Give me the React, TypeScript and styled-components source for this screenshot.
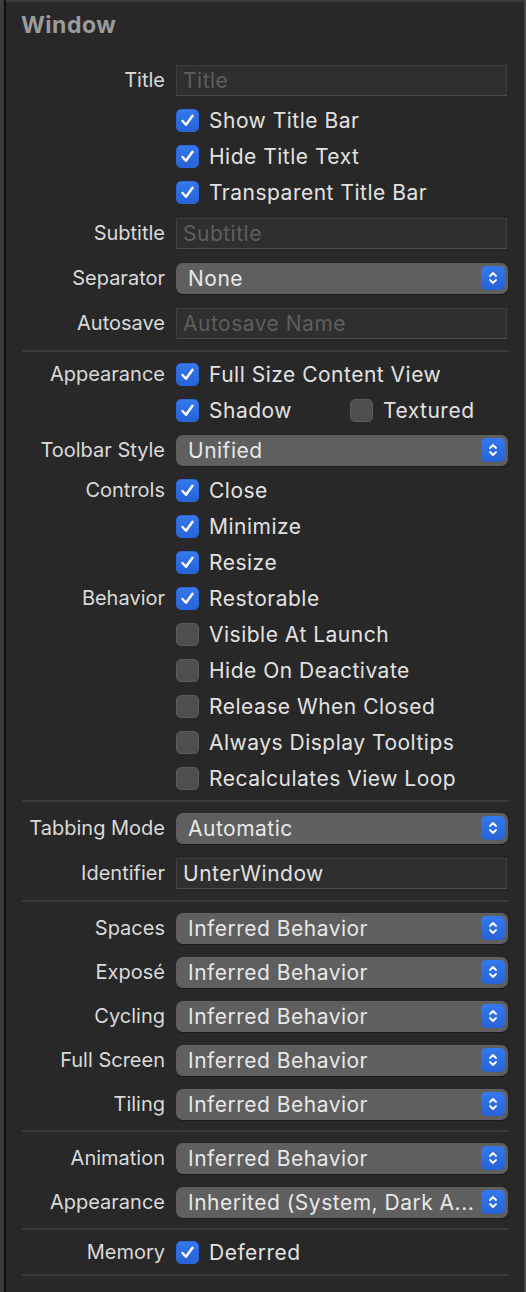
import React from 'react';
import styled, { createGlobalStyle } from 'styled-components';

const GlobalStyle = createGlobalStyle`
  html, body {
    margin: 0;
    padding: 0;
    background: #282828;
  }
  body {
    font-family: Inter, "Liberation Sans", sans-serif;
    -webkit-font-smoothing: antialiased;
  }
`;

const Frame = styled.div`
  display: flex;
  width: 526px;
  height: 1292px;
  overflow: hidden;
  background: #282828;
`;

const Gutter = styled.div`
  width: 4px;
  background: #3b3b3b;
  border-right: 2px solid #0e0e0e;
`;

const Panel = styled.div`
  flex: 1;
  display: flex;
  flex-direction: column;
  border-top: 2px solid #3a3a3a;
  border-right: 2px solid #474747;
  padding-right: 12px;
`;

const Header = styled.h2`
  margin: 0;
  height: 52px;
  padding: 10px 0 0 15px;
  box-sizing: border-box;
  font-size: 23px;
  letter-spacing: 0.5px;
  font-weight: 700;
  color: #9b9b9b;
  line-height: 26px;
`;

const Section = styled.div`
  display: flex;
  flex-direction: column;
  padding: 4px 0;
`;

const Divider = styled.div`
  height: 2px;
  margin: 0 3px 0 16px;
  background: #383838;
`;

const Row = styled.div<{ $h: number }>`
  display: grid;
  grid-template-columns: 159px 1fr;
  column-gap: 11px;
  align-items: center;
  height: ${p => p.$h}px;
`;

const Label = styled.div`
  text-align: right;
  font-size: 20px;
  color: #dadada;
  white-space: nowrap;
`;

const Controls = styled.div`
  display: flex;
  align-items: center;
`;

const Field = styled.div<{ $placeholder?: boolean }>`
  width: 331px;
  height: 31px;
  box-sizing: border-box;
  display: flex;
  align-items: center;
  padding: 0 6px;
  background: #2f2f2f;
  border: 1px solid #3e3e3e;
  border-bottom-color: #4a4a4a;
  font-size: 21px;
  letter-spacing: 0.5px;
  color: ${p => (p.$placeholder ? '#5e5e5e' : '#e2e2e2')};
`;

const Popup = styled.div`
  width: 332px;
  height: 31px;
  box-sizing: border-box;
  display: flex;
  align-items: center;
  justify-content: space-between;
  padding: 0 3px 0 12px;
  background: #5f5f5f;
  border-radius: 7px;
  box-shadow: 0 1px 1px rgba(0, 0, 0, 0.35);
  font-size: 21px;
  letter-spacing: 0.5px;
  color: #e8e8e8;
  white-space: nowrap;
`;

const Stepper = styled.div`
  width: 24px;
  height: 24px;
  border-radius: 5px;
  background: linear-gradient(#3479ec, #2762d6);
  display: flex;
  align-items: center;
  justify-content: center;
`;

const CheckItem = styled.label<{ $width?: number }>`
  display: flex;
  align-items: center;
  gap: 10px;
  width: ${p => (p.$width ? `${p.$width}px` : 'auto')};
  font-size: 21px;
  letter-spacing: 0.5px;
  color: #e2e2e2;
  white-space: nowrap;
`;

const Box = styled.span<{ $on: boolean }>`
  width: 23px;
  height: 23px;
  flex: none;
  box-sizing: border-box;
  border-radius: 5px;
  display: flex;
  align-items: center;
  justify-content: center;
  background: ${p => (p.$on ? 'linear-gradient(#3479ec, #2762d6)' : '#4e4e4e')};
  border: 1px solid ${p => (p.$on ? '#2c68dc' : '#5a5a5a')};
`;

const Check = ({ on, children, width }: { on: boolean; children: React.ReactNode; width?: number }) => (
  <CheckItem $width={width}>
    <Box $on={on}>
      {on ? (
        <svg width="15" height="15" viewBox="0 0 15 15">
          <path d="M2.5 8 L6 11.8 L12.5 2.8" fill="none" stroke="#fff" strokeWidth="2.4" strokeLinecap="round" strokeLinejoin="round" />
        </svg>
      ) : null}
    </Box>
    {children}
  </CheckItem>
);

const Select = ({ value }: { value: string }) => (
  <Popup>
    {value}
    <Stepper>
      <svg width="12" height="18" viewBox="0 0 12 18">
        <path d="M3 7 L6 4 L9 7 M3 11 L6 14 L9 11" fill="none" stroke="#fff" strokeWidth="1.8" strokeLinecap="round" strokeLinejoin="round" />
      </svg>
    </Stepper>
  </Popup>
);

const CheckRow = ({ label, on, children }: { label?: string; on: boolean; children: React.ReactNode }) => (
  <Row $h={36}>
    <Label>{label}</Label>
    <Controls>
      <Check on={on}>{children}</Check>
    </Controls>
  </Row>
);

const SelectRow = ({ label, value, h = 44 }: { label: string; value: string; h?: number }) => (
  <Row $h={h}>
    <Label>{label}</Label>
    <Controls>
      <Select value={value} />
    </Controls>
  </Row>
);

const FieldRow = ({ label, value, placeholder, h }: { label: string; value?: string; placeholder?: string; h: number }) => (
  <Row $h={h}>
    <Label>{label}</Label>
    <Controls>
      <Field $placeholder={!value}>{value || placeholder}</Field>
    </Controls>
  </Row>
);

const behaviors = ['Spaces', 'Exposé', 'Cycling', 'Full Screen', 'Tiling'];

export default function App() {
  return (
    <>
      <GlobalStyle />
      <Frame>
        <Gutter />
        <Panel>
          <Header>Window</Header>
          <Section>
            <FieldRow label="Title" placeholder="Title" h={44} />
            <CheckRow on>Show Title Bar</CheckRow>
            <CheckRow on>Hide Title Text</CheckRow>
            <CheckRow on>Transparent Title Bar</CheckRow>
            <FieldRow label="Subtitle" placeholder="Subtitle" h={46} />
            <SelectRow label="Separator" value="None" />
            <FieldRow label="Autosave" placeholder="Autosave Name" h={46} />
          </Section>
          <Divider />
          <Section>
            <CheckRow label="Appearance" on>Full Size Content View</CheckRow>
            <Row $h={36}>
              <Label />
              <Controls>
                <Check on width={174}>Shadow</Check>
                <Check on={false}>Textured</Check>
              </Controls>
            </Row>
            <SelectRow label="Toolbar Style" value="Unified" />
            <CheckRow label="Controls" on>Close</CheckRow>
            <CheckRow on>Minimize</CheckRow>
            <CheckRow on>Resize</CheckRow>
            <CheckRow label="Behavior" on>Restorable</CheckRow>
            <CheckRow on={false}>Visible At Launch</CheckRow>
            <CheckRow on={false}>Hide On Deactivate</CheckRow>
            <CheckRow on={false}>Release When Closed</CheckRow>
            <CheckRow on={false}>Always Display Tooltips</CheckRow>
            <CheckRow on={false}>Recalculates View Loop</CheckRow>
          </Section>
          <Divider />
          <Section>
            <SelectRow label="Tabbing Mode" value="Automatic" />
            <FieldRow label="Identifier" value="UnterWindow" h={46} />
          </Section>
          <Divider />
          <Section>
            {behaviors.map(b => (
              <SelectRow key={b} label={b} value="Inferred Behavior" />
            ))}
          </Section>
          <Divider />
          <Section>
            <SelectRow label="Animation" value="Inferred Behavior" />
            <SelectRow label="Appearance" value="Inherited (System, Dark A..." />
          </Section>
          <Divider />
          <Section>
            <CheckRow label="Memory" on>Deferred</CheckRow>
          </Section>
          <Divider />
        </Panel>
      </Frame>
    </>
  );
}
